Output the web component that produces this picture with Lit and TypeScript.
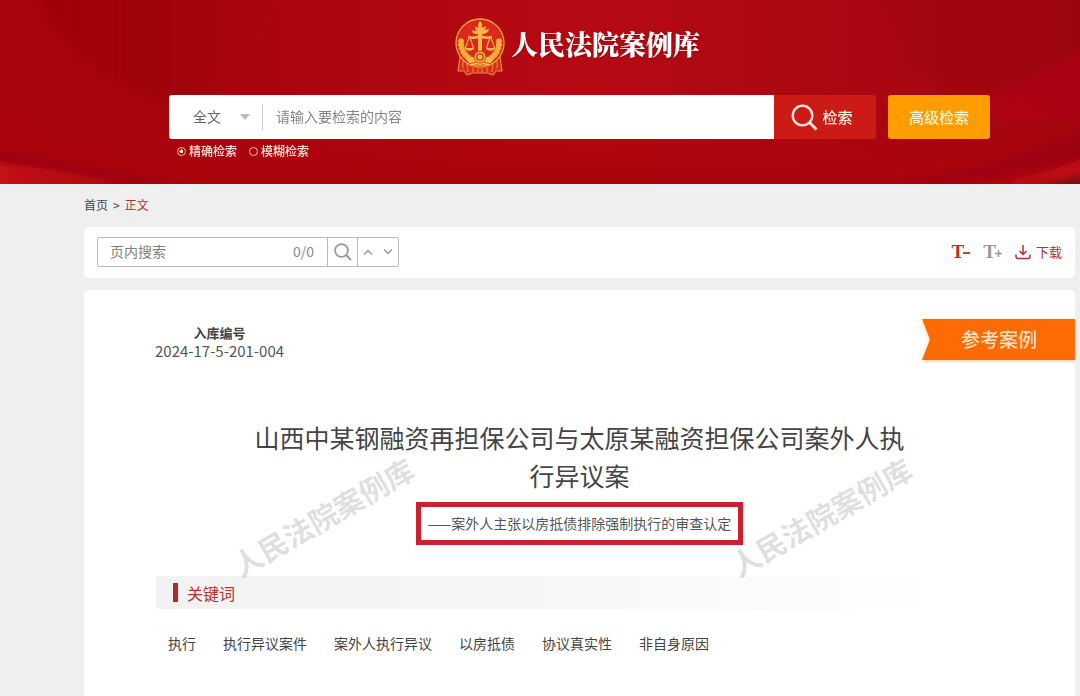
import { LitElement, html, css, svg } from "lit";
import { customElement, property, state } from "lit/decorators.js";

const CJK = css`"Noto Sans CJK SC", "Noto Sans", sans-serif`;

@customElement("court-emblem")
class CourtEmblem extends LitElement {
  static styles = css`
    :host {
      display: block;
      width: 50px;
      height: 58px;
    }
    svg {
      display: block;
      width: 100%;
      height: 100%;
    }
  `;

  private wheat(side: 1 | -1) {
    const grains = [];
    for (let i = 0; i < 8; i++) {
      const a = ((-6 + i * 11.5) * Math.PI) / 180;
      const cx = 25 + side * 19 * Math.cos(a);
      const cy = 25 + 18.6 * Math.sin(a);
      const tilt = side * (-12 + i * 10);
      grains.push(
        svg`<ellipse cx=${cx} cy=${cy} rx="3" ry="2.5" transform="rotate(${tilt} ${cx} ${cy})" />`
      );
    }
    return grains;
  }

  render() {
    return html`<svg viewBox="0 0 50 58" aria-hidden="true">
      <path d="M5 39 L3 53 L9 53 L12 57 L18 55 L32 55 L38 57 L41 53 L47 53 L45 39 Z" fill="#d8301c" stroke="#f08a3c" stroke-width="1.2" stroke-linejoin="round" />
      <path d="M8 43 L8 50 M12 46 L13 54 M18 49 V54 M23 50 V54 M27 50 V54 M32 49 V54 M38 46 L37 54 M42 43 L42 50" stroke="#f08a3c" stroke-width="1" fill="none" />
      <circle cx="25" cy="25" r="24" fill="#dc281a" stroke="#f3a244" stroke-width="1.3" />
      <g fill="#f8b13f" stroke="#e88a2a" stroke-width=".4">${this.wheat(1)}${this.wheat(-1)}</g>
      <g fill="#fbb84a">
        <path d="M25 3 C27 5 28 7 26.500 10 L31 8 C31.500 11 29.500 12 27 12.500 L34 11 C33.500 15 30 16 27 16 V36 H23 V16 C20 16 17 15.500 17 12.500 L23 13 C20.500 12 19.500 10.500 20 8.500 L23.500 10 C22.500 7 23 5 25 3 Z" />
        <path d="M13.500 17.500 C19 20 22 17 25 17 S31 20 36.500 17.500 L36.500 19.500 C31 22.500 28 20 25 20 S19 22.500 13.500 19.500 Z" />
        <path d="M10 30 H19 C18.500 33.500 10.500 33.500 10 30 Z M31 30 H40 C39.500 33.500 31.500 33.500 31 30 Z" />
        <path d="M14.500 18 L10.500 30 M14.500 18 L18.500 30 M35.500 18 L31.500 30 M35.500 18 L39.500 30" stroke="#fbb84a" stroke-width="1.100" fill="none" />
        <path d="M12 42 C17 37 33 37 38 42 L34 48 H16 Z" />
      </g>
      <circle cx="25" cy="39" r="6" fill="#f8b13f" stroke="#c9401c" stroke-width="1" />
      <circle cx="25" cy="39" r="3.2" fill="#f8b13f" stroke="#c23a1a" stroke-width="1.3" />
      <path d="M14 46 L21 44 M17 49 L23 46 M36 46 L29 44 M33 49 L27 46 M22 48 H28" stroke="#cf4a1c" stroke-width="1" />
    </svg>`;
  }
}

@customElement("site-header")
class SiteHeader extends LitElement {
  @state() private mode = "exact";

  static styles = css`
    :host {
      display: block;
      position: relative;
      background: #ae060d;
      font-family: ${CJK};
      overflow: hidden;
    }
    .backdrop {
      position: absolute;
      inset: 0;
      width: 100%;
      height: 100%;
    }
    .content {
      position: relative;
      padding: 18px 5px 22px 84px;
    }
    .brand {
      display: flex;
      justify-content: center;
      align-items: center;
      gap: 6px;
      height: 58px;
      margin-bottom: 19px;
      padding-right: 4px;
    }
    .name {
      margin: 0;
      padding-bottom: 6px;
      color: #fff;
      font: 900 27px/36px "Noto Serif CJK SC", "Noto Sans CJK SC", serif;
      text-shadow: 0 1px 2px rgba(90, 0, 0, 0.5);
    }
    .search {
      max-width: 821px;
      margin: 0 auto;
    }
    .bar {
      display: flex;
      height: 44px;
    }
    .field {
      flex: 1;
      display: flex;
      align-items: center;
      background: #fff;
      border-radius: 3px 0 0 3px;
      min-width: 0;
    }
    .scope {
      position: relative;
      display: flex;
      align-items: center;
      width: 93px;
      height: 26px;
      border-right: 1px solid #ccc;
    }
    select {
      appearance: none;
      width: 100%;
      padding: 0 0 2px 24px;
      border: 0;
      background: none;
      color: #666;
      font: 14px/24px ${CJK};
    }
    .caret {
      position: absolute;
      right: 12px;
      top: 10px;
      width: 10px;
      height: 6px;
      pointer-events: none;
    }
    .query {
      flex: 1;
      min-width: 0;
      padding: 0 13px 2px;
      border: 0;
      outline: 0;
      background: none;
      font: 14px/24px ${CJK};
    }
    .query::placeholder {
      color: #858585;
      opacity: 1;
    }
    button {
      display: flex;
      align-items: center;
      justify-content: center;
      width: 102px;
      padding: 0;
      border: 0;
      color: #ffeedd;
      font: 500 15px/22px ${CJK};
    }
    .go {
      gap: 4px;
      padding-right: 6px;
      background: #cc1a17;
      border-radius: 0 3px 3px 0;
    }
    .go svg {
      width: 27px;
      height: 27px;
    }
    .advanced {
      margin-left: 12px;
      background: #ff9c00;
      border-radius: 3px;
      color: #fff3cf;
    }
    .modes {
      display: flex;
      gap: 12px;
      margin: 0;
      padding: 1px 0 0 8px;
      border: 0;
    }
    label {
      display: flex;
      align-items: center;
      gap: 3px;
      color: #ffe3e0;
      font-size: 12px;
      line-height: 22px;
      font-weight: 500;
    }
    input[type="radio"] {
      appearance: none;
      width: 9px;
      height: 9px;
      margin: 0;
      border: 1px solid #ffb9a8;
      border-radius: 50%;
    }
    input[type="radio"]:checked {
      background: radial-gradient(circle, #ffe0d0 0 2px, transparent 2px);
    }
  `;

  render() {
    return html`
      <svg class="backdrop" viewBox="0 0 1080 184" preserveAspectRatio="none" aria-hidden="true">
        <defs>
          <linearGradient id="base" x1="0" x2="1" y1="0" y2="0">
            <stop offset="0" stop-color="#a9040c" />
            <stop offset=".14" stop-color="#a4050d" />
            <stop offset=".3" stop-color="#ad060e" />
            <stop offset=".55" stop-color="#b60a13" />
            <stop offset=".75" stop-color="#ab0812" />
            <stop offset="1" stop-color="#a10712" />
          </linearGradient>
          <linearGradient id="fall" x1="0" x2="0" y1="0" y2="1">
            <stop offset=".5" stop-color="#ac040b" stop-opacity="0" />
            <stop offset="1" stop-color="#ac040b" />
          </linearGradient>
          <linearGradient id="foldL" x1="0" x2="1" y1="0" y2="0">
            <stop offset="0" stop-color="#8f0510" stop-opacity=".4" />
            <stop offset="1" stop-color="#8f0510" stop-opacity="0" />
          </linearGradient>
          <linearGradient id="ribbonL" x1="0" x2="1" y1="0" y2="0">
            <stop offset="0" stop-color="#c5141a" />
            <stop offset="1" stop-color="#b8080f" stop-opacity=".4" />
          </linearGradient>
          <linearGradient id="ribbonR" x1="0" x2="1" y1="0" y2="0">
            <stop offset="0" stop-color="#b8080f" stop-opacity=".1" />
            <stop offset="1" stop-color="#c5131a" />
          </linearGradient>
          <filter id="soft" x="-20%" y="-20%" width="140%" height="140%"><feGaussianBlur stdDeviation="3" /></filter>
        </defs>
        <rect width="1080" height="184" fill="url(#base)" />
        <rect width="1080" height="184" fill="url(#fall)" />
        <g filter="url(#soft)">
          <path d="M28 -10 H280 C240 60 210 100 160 104 C100 84 65 40 28 -10 Z" fill="url(#foldL)" />
          <path d="M-10 147 C60 160 120 168 210 190 H130 C80 176 40 168 -10 164 Z" fill="#8f0610" opacity=".45" />
          <path d="M-10 162 C45 168 90 175 150 190 H-10 Z" fill="url(#ribbonL)" />
          <path d="M880 -10 H1090 V44 C1040 78 990 95 950 96 C920 70 890 40 880 -10 Z" fill="#8f0714" opacity=".2" />
          <path d="M1090 44 C1050 72 1010 95 930 104 C980 130 1050 130 1090 108 Z" fill="#b60b14" opacity=".5" />
          <path d="M840 190 C960 175 1030 150 1090 124 V160 C1030 172 980 180 930 190 Z" fill="#930610" opacity=".45" />
          <path d="M950 190 C1020 180 1050 171 1090 157 V170 C1060 179 1040 183 1010 190 Z" fill="url(#ribbonR)" />
          <path d="M1030 190 C1050 184 1065 180 1090 172 V190 Z" fill="#7e0712" />
        </g>
      </svg>
      <div class="content">
        <div class="brand">
          <court-emblem></court-emblem>
          <h1 class="name">人民法院案例库</h1>
        </div>
        <form class="search" @submit=${(e: Event) => e.preventDefault()}>
          <div class="bar">
            <div class="field">
              <div class="scope">
                <select aria-label="检索范围"><option>全文</option></select>
                <svg class="caret" viewBox="0 0 10 6" aria-hidden="true"><path d="M0 0H10L5 6Z" fill="#bbb" /></svg>
              </div>
              <input class="query" type="text" aria-label="检索内容" placeholder="请输入要检索的内容" />
            </div>
            <button class="go" type="submit">
              <svg viewBox="0 0 27 27" fill="none" stroke="#ffe6dc" aria-hidden="true">
                <circle cx="11.500" cy="11.500" r="9.800" stroke-width="2.300" />
                <path d="M18.500 18.500L25.500 25.500" stroke-width="2.800" />
              </svg>
              <span>检索</span>
            </button>
            <button class="advanced" type="button">高级检索</button>
          </div>
          <fieldset class="modes" aria-label="检索方式">
            <label><input type="radio" name="mode" .checked=${this.mode === "exact"} @change=${() => (this.mode = "exact")} />精确检索</label>
            <label><input type="radio" name="mode" .checked=${this.mode === "fuzzy"} @change=${() => (this.mode = "fuzzy")} />模糊检索</label>
          </fieldset>
        </form>
      </div>
    `;
  }
}

@customElement("page-toolbar")
class PageToolbar extends LitElement {
  static styles = css`
    :host {
      display: flex;
      align-items: center;
      justify-content: space-between;
      box-sizing: border-box;
      min-height: 51px;
      padding: 0 13px 2px;
      background: #fff;
      border-radius: 5px;
      font-family: ${CJK};
    }
    .find {
      display: flex;
      box-sizing: border-box;
      width: 302px;
      height: 30px;
      border: 1px solid #bbb;
      border-radius: 2px;
      color: #888;
    }
    input {
      flex: 1;
      min-width: 0;
      padding: 0 12px 2px;
      border: 0;
      outline: 0;
      background: none;
      font: 14px/26px ${CJK};
    }
    input::placeholder {
      color: #808080;
      opacity: 1;
    }
    .count {
      padding-right: 13px;
      font-size: 14px;
      line-height: 26px;
    }
    button {
      display: flex;
      align-items: center;
      justify-content: center;
      padding: 0;
      border: 0;
      background: none;
      color: #888;
      font-family: inherit;
    }
    .find button {
      width: 20px;
    }
    .find .lens {
      width: 31px;
      box-sizing: border-box;
      border: solid #bbb;
      border-width: 0 1px;
    }
    .lens svg {
      width: 18px;
      height: 18px;
    }
    .step svg {
      width: 10px;
      height: 6px;
    }
    .tools {
      display: flex;
      align-items: center;
      gap: 13px;
    }
    .size {
      font: 700 19px/24px "Liberation Serif", serif;
      color: #999;
    }
    .size svg {
      width: 7px;
      height: 7px;
      margin: 4px 0 0 -1px;
    }
    .smaller,
    .download {
      color: #b5302c;
    }
    .download {
      gap: 5px;
      font-size: 13px;
      line-height: 20px;
    }
    .download svg {
      width: 16px;
      height: 16px;
    }
  `;

  render() {
    return html`
      <div class="find">
        <input type="text" aria-label="页内搜索" placeholder="页内搜索" />
        <span class="count">0/0</span>
        <button class="lens" aria-label="搜索">
          <svg viewBox="0 0 18 18" fill="none" stroke="#999" aria-hidden="true">
            <circle cx="7.500" cy="7.500" r="6.400" stroke-width="1.800" />
            <path d="M12 12L17 17" stroke-width="2" />
          </svg>
        </button>
        <button class="step" aria-label="上一个">
          <svg viewBox="0 0 10 6" fill="none" stroke="#999" stroke-width="1.500" aria-hidden="true"><path d="M1 5.500L5 1.500L9 5.500" /></svg>
        </button>
        <button class="step" aria-label="下一个">
          <svg viewBox="0 0 10 6" fill="none" stroke="#999" stroke-width="1.500" aria-hidden="true"><path d="M1 .5L5 4.500L9 .5" /></svg>
        </button>
      </div>
      <div class="tools">
        <button class="size smaller" aria-label="缩小字号">T<svg viewBox="0 0 7 7" stroke="currentColor" stroke-width="1.800" aria-hidden="true"><path d="M0 3H7" /></svg></button>
        <button class="size" aria-label="放大字号">T<svg viewBox="0 0 7 7" stroke="currentColor" stroke-width="1.500" aria-hidden="true"><path d="M0 3.500H7M3.500 0V7" /></svg></button>
        <button class="download">
          <svg viewBox="0 0 16 16" fill="none" stroke="currentColor" stroke-width="1.500" aria-hidden="true">
            <path d="M8 1V10.500M4.500 7L8 10.500L11.500 7M1 10.500V12.500Q1 14.500 3 14.500H13Q15 14.500 15 12.500V10.500" />
          </svg>
          下载
        </button>
      </div>
    `;
  }
}

@customElement("case-article")
class CaseArticle extends LitElement {
  @property({ attribute: false }) keywords: string[] = [];

  static styles = css`
    :host {
      display: block;
      position: relative;
      overflow: hidden;
      background: #fff;
      border-radius: 5px 5px 0 0;
      font-family: ${CJK};
      color: #444;
    }
    .top {
      display: flex;
      justify-content: space-between;
      align-items: flex-start;
      padding: 29px 0 0 71px;
    }
    .number {
      margin: 5px 0 0;
      text-align: center;
      line-height: 18px;
    }
    dt {
      font-size: 13px;
      font-weight: 700;
    }
    dd {
      margin: 0;
      font-size: 15px;
      color: #555;
    }
    .tag {
      filter: drop-shadow(0 1px 2px rgba(255, 110, 0, 0.4));
    }
    .tag span {
      display: block;
      padding: 0 38px 2px 39px;
      background: #fc6b04;
      clip-path: polygon(0 0, 100% 0, 100% 100%, 0 100%, 8px 50%);
      color: #ffe2c4;
      font-size: 19px;
      font-weight: 500;
      line-height: 39px;
    }
    h2 {
      max-width: 660px;
      margin: 58px auto 0;
      text-align: center;
      font-size: 25px;
      font-weight: 400;
      line-height: 38px;
    }
    .subtitle {
      width: fit-content;
      margin: 8px auto 0;
      padding: 0 7px;
      border: 5px solid #cc2030;
      color: #555;
      font-size: 14px;
      line-height: 33px;
    }
    .section {
      margin: 31px 72px 0;
      padding: 0 17px;
      display: flex;
      align-items: center;
      gap: 9px;
      height: 33px;
      border-radius: 3px;
      background: linear-gradient(90deg, #f2f2f2, #f7f7f7 50%, #fff 93%);
      color: #b8312f;
      font-size: 16px;
      line-height: 24px;
      font-weight: 400;
    }
    .section::before {
      content: "";
      width: 5px;
      height: 19px;
      background: #b8252a;
    }
    ul {
      display: flex;
      flex-wrap: wrap;
      gap: 12px 27px;
      margin: 22px 84px 32px;
      padding: 0;
      list-style: none;
      font-size: 14px;
      line-height: 24px;
    }
    .marks {
      position: absolute;
      inset: 208px 6px auto -10px;
      display: flex;
      justify-content: space-around;
      pointer-events: none;
    }
    .marks span {
      color: rgba(0, 0, 0, 0.14);
      font-size: 29px;
      font-weight: 700;
      line-height: 36px;
      white-space: nowrap;
      transform: rotate(-30deg);
    }
  `;

  render() {
    return html`
      <div class="top">
        <dl class="number">
          <dt>入库编号</dt>
          <dd>2024-17-5-201-004</dd>
        </dl>
        <div class="tag"><span>参考案例</span></div>
      </div>
      <h2>山西中某钢融资再担保公司与太原某融资担保公司案外人执行异议案</h2>
      <div class="subtitle">——案外人主张以房抵债排除强制执行的审查认定</div>
      <h3 class="section">关键词</h3>
      <ul>
        ${this.keywords.map((k) => html`<li>${k}</li>`)}
      </ul>
      <div class="marks" aria-hidden="true">
        <span>人民法院案例库</span>
        <span>人民法院案例库</span>
      </div>
    `;
  }
}

@customElement("app-root")
class AppRoot extends LitElement {
  private keywords = ["执行", "执行异议案件", "案外人执行异议", "以房抵债", "协议真实性", "非自身原因"];

  static styles = css`
    :host {
      display: flex;
      flex-direction: column;
      min-height: 100vh;
      background: #efefef;
      font-family: ${CJK};
    }
    main {
      flex: 1;
      display: flex;
      flex-direction: column;
      padding: 0 5px 0 84px;
    }
    nav {
      display: flex;
      gap: 5px;
      padding: 11px 0 12px;
      color: #444;
      font-size: 12px;
      line-height: 20px;
    }
    a {
      color: inherit;
      text-decoration: none;
    }
    .current {
      color: #c02a32;
    }
    case-article {
      flex: 1;
      margin-top: 12px;
    }
  `;

  render() {
    return html`
      <site-header></site-header>
      <main>
        <nav aria-label="当前位置">
          <a href="#">首页</a><span>&gt;</span><a class="current" href="#" aria-current="page">正文</a>
        </nav>
        <page-toolbar></page-toolbar>
        <case-article .keywords=${this.keywords}></case-article>
      </main>
    `;
  }
}
